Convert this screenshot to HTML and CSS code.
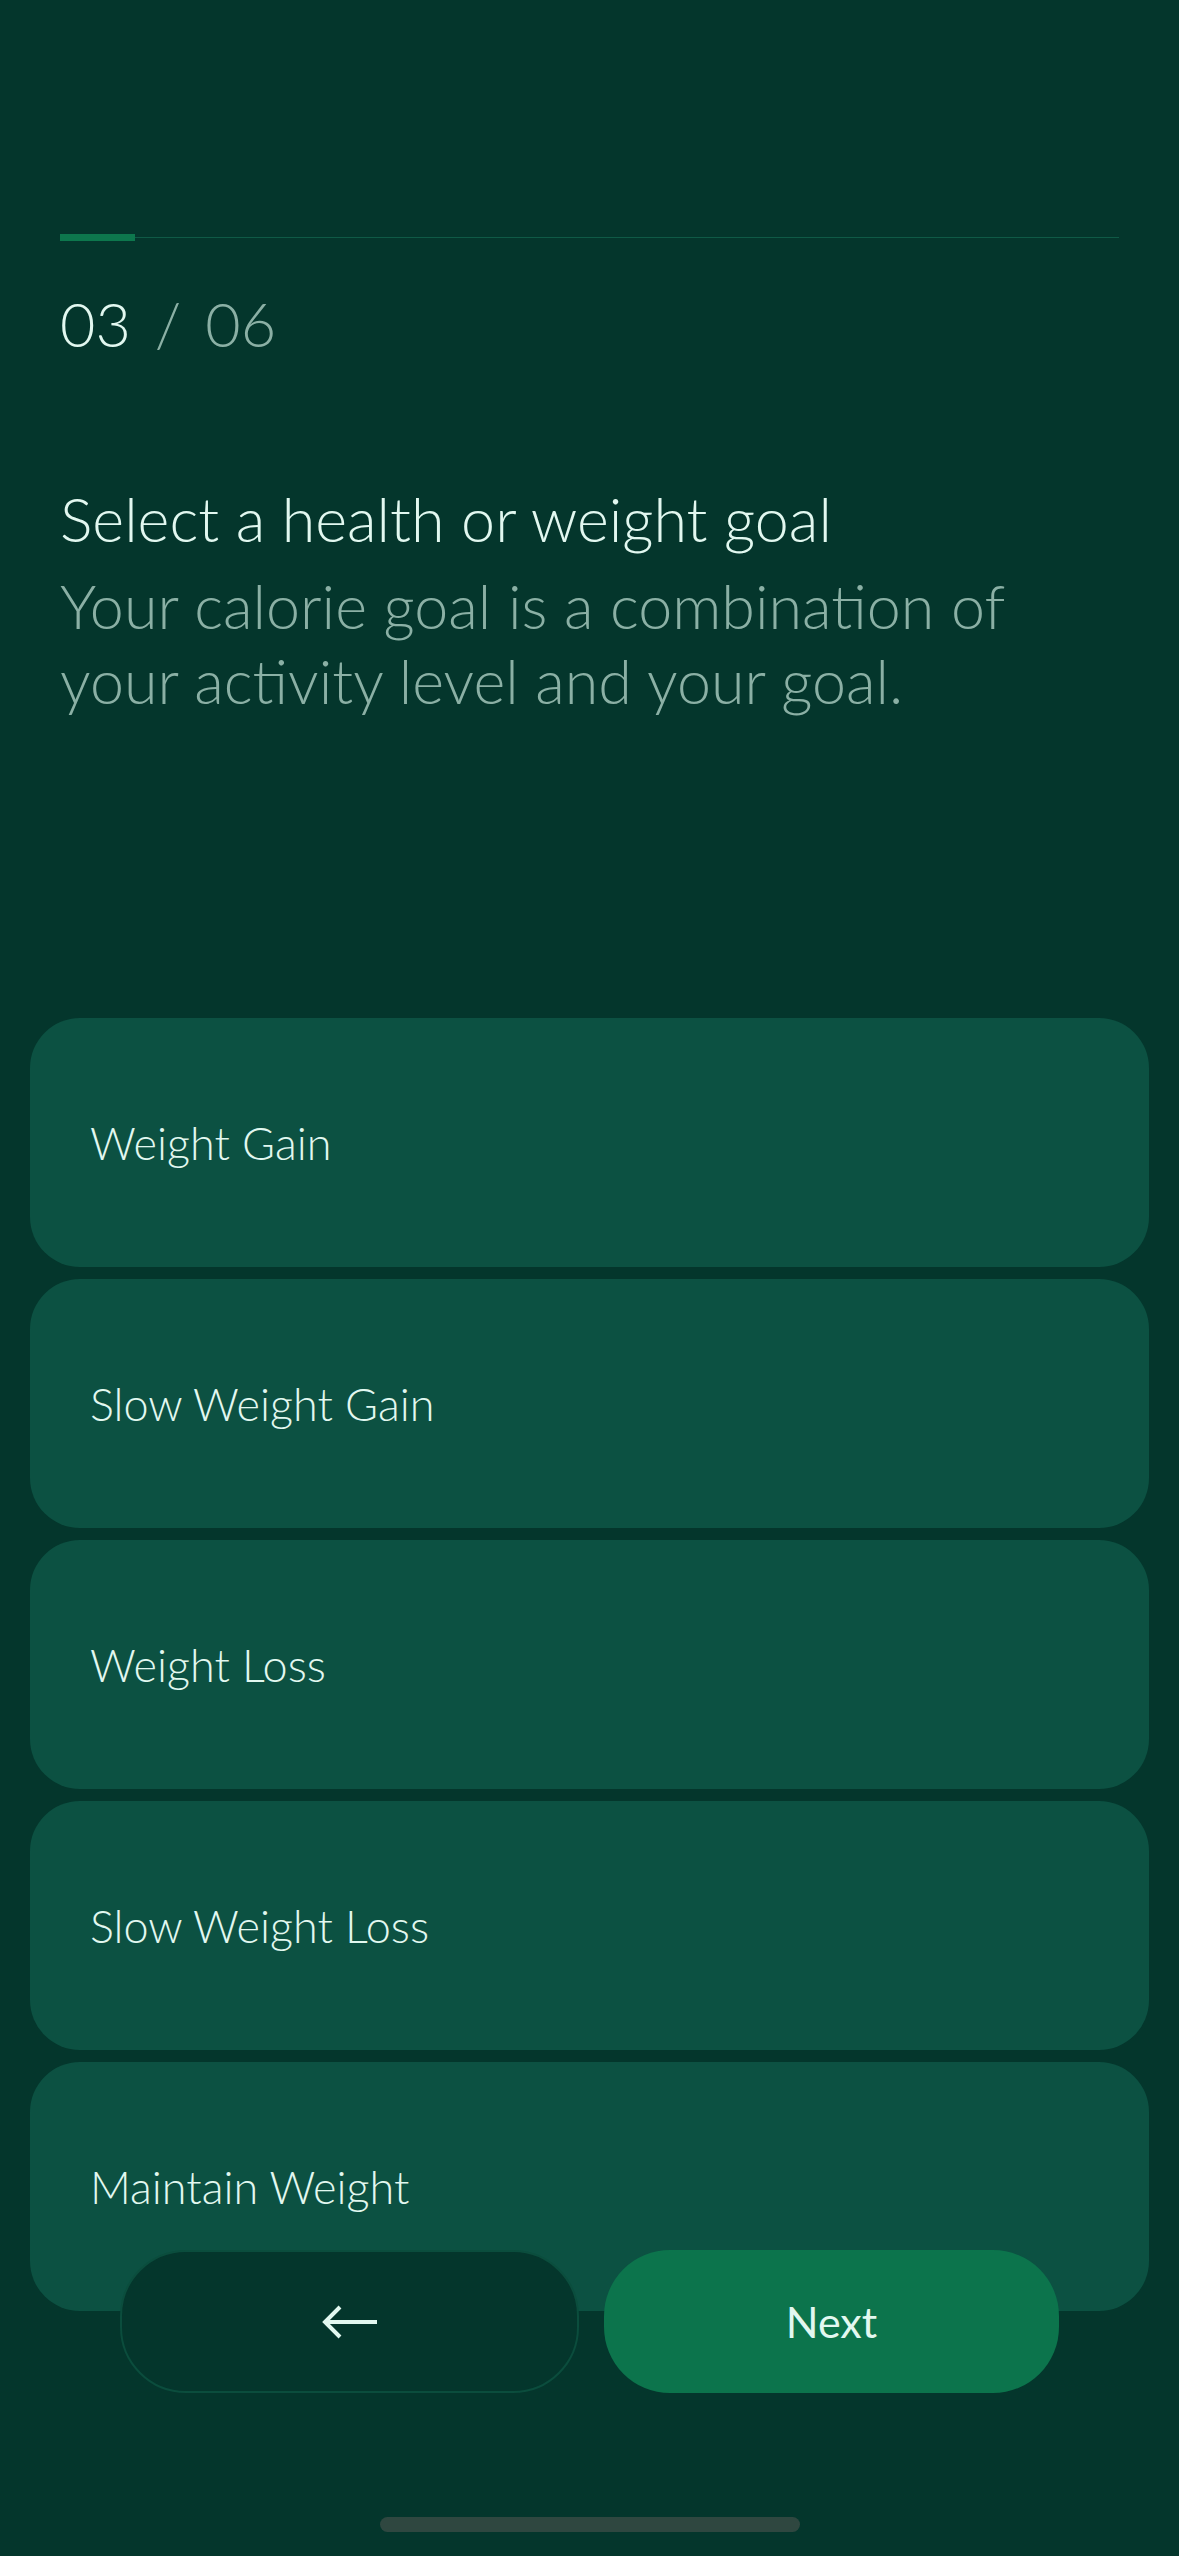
FILE: index.html
```html
<!DOCTYPE html>
<html lang="en">
<head>
<meta charset="utf-8">
<title>Select a goal</title>
<link rel="stylesheet" href="styles.css">
</head>
<body>
<div class="screen">
  <div class="progress">
    <div class="progress-fill"></div>
  </div>
  <div class="counter"><span class="current">03</span><span class="sep">/</span><span class="total">06</span></div>

  <h1 class="title">Select a health or weight goal</h1>
  <p class="subtitle">Your calorie goal is a combination of your activity level and your goal.</p>

  <div class="options">
    <div class="option">Weight Gain</div>
    <div class="option">Slow Weight Gain</div>
    <div class="option">Weight Loss</div>
    <div class="option">Slow Weight Loss</div>
    <div class="option">Maintain Weight</div>
  </div>

  <div class="actions">
    <button class="btn btn-back" aria-label="Back">
      <svg width="60" height="40" viewBox="0 0 60 40" fill="none" stroke="#e2f8f0" stroke-width="4" stroke-linecap="butt" stroke-linejoin="miter">
        <path d="M57 20 H5"/>
        <path d="M20 5 L5 20 L20 35"/>
      </svg>
    </button>
    <button class="btn btn-next">Next</button>
  </div>

  <div class="home-indicator"></div>
</div>
</body>
</html>
```

FILE: styles.css
```css
html, body {
  margin: 0;
  padding: 0;
  background: #04362c;
}

.screen {
  position: relative;
  width: 1179px;
  height: 2556px;
  overflow: hidden;
  box-sizing: border-box;
  padding-top: 234px;
  font-family: "Lato", "Liberation Sans", sans-serif;
  font-weight: 300;
  color: #e2f8f0;
}

.progress {
  position: relative;
  margin: 0 60px;
  height: 7px;
  display: flex;
  align-items: center;
  background: linear-gradient(#0f5a46, #0f5a46) center / 100% 1px no-repeat;
}

.progress-fill {
  width: 75px;
  height: 7px;
  background: #0d774d;
}

.counter {
  margin: 45px 60px 0;
  font-size: 61px;
  line-height: 75px;
  height: 75px;
  display: flex;
  gap: 24px;
}

.counter .current {
  color: #e2f8f0;
}

.counter .sep,
.counter .total {
  color: #8bb0a5;
}

.title {
  margin: 120px 60px 12px;
  font-size: 61px;
  line-height: 75px;
  font-weight: 300;
  color: #e2f8f0;
}

.subtitle {
  margin: 0 60px;
  font-size: 61px;
  line-height: 75px;
  color: #8bb0a5;
}

.options {
  margin: 300px 30px 0;
  display: flex;
  flex-direction: column;
  gap: 12px;
}

.option {
  height: 249px;
  box-sizing: border-box;
  padding: 0 60px;
  display: flex;
  align-items: center;
  background: #0c5142;
  border-radius: 50px;
  font-size: 45px;
  color: #e2f8f0;
}

.actions {
  position: absolute;
  left: 120px;
  right: 120px;
  bottom: 163px;
  display: flex;
  gap: 25px;
}

.btn {
  flex: 1;
  height: 143px;
  border-radius: 66px;
  display: flex;
  align-items: center;
  justify-content: center;
  font-family: "Lato", "Liberation Sans", sans-serif;
  font-weight: 400;
  font-size: 43px;
  color: #e2f8f0;
  padding: 0;
  cursor: pointer;
}

.btn-back {
  background: #04362c;
  border: 2px solid #0b4d3d;
}

.btn-next {
  background: #0c744c;
  border: none;
}

.home-indicator {
  position: absolute;
  left: 380px;
  bottom: 24px;
  width: 420px;
  height: 15px;
  border-radius: 8px;
  background: #2f4740;
}
```
